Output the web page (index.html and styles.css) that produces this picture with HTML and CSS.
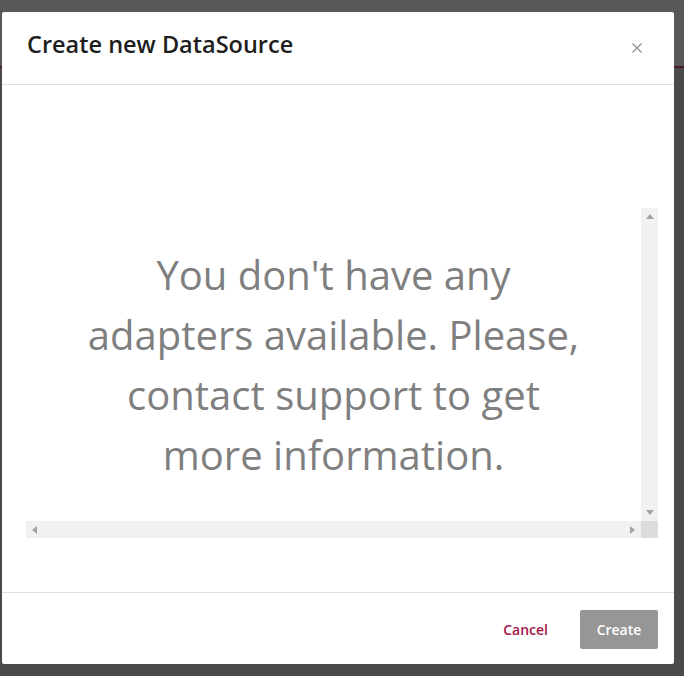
FILE: index.html
```html
<!DOCTYPE html>
<html>
<head>
<meta charset="utf-8">
<link rel="stylesheet" href="styles.css">
</head>
<body>
<div class="page">
  <div class="page-top"></div>
  <div class="page-line"></div>
  <div class="page-rest"></div>
</div>
<div class="modal">
  <div class="modal-header">
    <h2 class="modal-title">Create new DataSource</h2>
    <button class="close" aria-label="Close">
      <svg width="10" height="10" viewBox="0 0 10 10"><path d="M0.5 0.5L9.5 9.5M9.5 0.5L0.5 9.5" stroke="#8a8a8a" stroke-width="1.1" fill="none"/></svg>
    </button>
  </div>
  <div class="modal-body">
    <div class="scroller">
      <div class="scroll-content">
        <p class="empty">You don't have any adapters available. Please, contact support to get more information.</p>
      </div>
      <div class="vbar">
        <svg class="arr" width="8" height="5" viewBox="0 0 8 5"><path d="M0 5L4 0L8 5Z" fill="#a3a3a3"/></svg>
        <svg class="arr" width="8" height="5" viewBox="0 0 8 5"><path d="M0 0L4 5L8 0Z" fill="#a3a3a3"/></svg>
      </div>
      <div class="hbar">
        <svg class="arr" width="5" height="8" viewBox="0 0 5 8"><path d="M5 0L0 4L5 8Z" fill="#a3a3a3"/></svg>
        <svg class="arr" width="5" height="8" viewBox="0 0 5 8"><path d="M0 0L5 4L0 8Z" fill="#a3a3a3"/></svg>
      </div>
      <div class="corner"></div>
    </div>
  </div>
  <div class="modal-footer">
    <button class="btn-cancel">Cancel</button>
    <button class="btn-create">Create</button>
  </div>
</div>
</body>
</html>
```
FILE: styles.css
```css
html, body {
  margin: 0;
  padding: 0;
  width: 684px;
  height: 676px;
  overflow: hidden;
  font-family: "Open Sans", "Liberation Sans", sans-serif;
}
body {
  position: relative;
  background: #4a4a4a;
}
.page {
  display: flex;
  flex-direction: column;
  height: 676px;
}
.page-top { height: 66px; background: #585858; }
.page-line { height: 2px; background: #4b1a2c; }
.page-rest { flex: 1; background: #4a4a4a; }

.modal {
  position: absolute;
  left: 2px;
  top: 12px;
  width: 672px;
  height: 652px;
  background: #fff;
  border-radius: 2px;
  display: flex;
  flex-direction: column;
  box-sizing: border-box;
}
.modal-header {
  height: 72px;
  border-bottom: 1px solid #dedede;
  display: flex;
  align-items: center;
  justify-content: space-between;
  padding: 0 32px 0 25px;
  flex: none;
}
.modal-title {
  margin: 0;
  font-size: 23.5px;
  font-weight: 600;
  color: #1e1e1e;
  letter-spacing: 0;
  position: relative;
  top: -4px;
}
.close {
  border: 0;
  background: none;
  padding: 0;
  width: 10px;
  height: 10px;
  display: flex;
  position: relative;
  top: 0px;
}
.modal-body {
  flex: 1;
  padding: 123px 16px 0 24px;
  border-bottom: 1px solid #dedede;
}
.scroller {
  display: grid;
  grid-template-columns: 615px 17px;
  grid-template-rows: 313px 17px;
}
.scroll-content {
  display: flex;
  align-items: center;
  justify-content: center;
}
.empty {
  margin: 0;
  font-size: 40px;
  line-height: 60px;
  color: #7f7f7f;
  text-align: center;
  width: 500px;
  position: relative;
  top: 0px;
}
.vbar {
  background: #f1f1f1;
  display: flex;
  flex-direction: column;
  justify-content: space-between;
  align-items: center;
  padding: 6px 0 6px;
}
.hbar {
  background: #f1f1f1;
  display: flex;
  justify-content: space-between;
  align-items: center;
  padding: 0 6px 0 6px;
}
.corner { background: #dcdcdc; }
.arr { display: block; }

.modal-footer {
  height: 71px;
  flex: none;
  display: flex;
  align-items: center;
  justify-content: flex-end;
  padding: 0 16px 0 0;
  gap: 32px;
}
.btn-cancel {
  border: 0;
  background: none;
  font-family: "Open Sans", "Liberation Sans", sans-serif;
  font-size: 14px;
  font-weight: 600;
  color: #a3154d;
  padding: 0;
  position: relative;
  top: 1px;
}
.btn-create {
  border: 0;
  background: #969696;
  color: #fff;
  font-family: "Open Sans", "Liberation Sans", sans-serif;
  font-size: 14px;
  font-weight: 600;
  width: 78px;
  height: 39px;
  border-radius: 2px;
  padding: 0;
  position: relative;
  top: 1px;
}
```
